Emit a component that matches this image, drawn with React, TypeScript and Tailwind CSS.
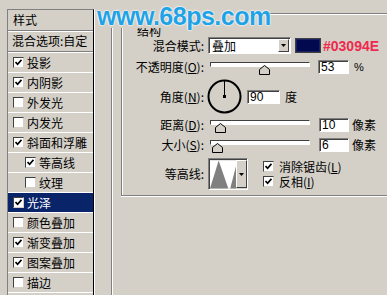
const styles = [
  { label: "投影", on: true },
  { label: "内阴影", on: true },
  { label: "外发光", on: false },
  { label: "内发光", on: false },
  { label: "斜面和浮雕", on: true },
  { label: "等高线", on: true, sub: true },
  { label: "纹理", on: false, sub: true },
  { label: "光泽", on: true, active: true },
  { label: "颜色叠加", on: false },
  { label: "渐变叠加", on: true },
  { label: "图案叠加", on: true },
  { label: "描边", on: false },
];

function Check({ on }: { on: boolean }) {
  return (
    <span className="flex h-[11px] w-[11px] shrink-0 items-center justify-center border border-b-[#d4d0c8] border-l-[#404040] border-r-[#d4d0c8] border-t-[#404040] bg-white">
      {on && (
        <svg width="7" height="7" viewBox="0 0 7 7">
          <path d="M0.5 3 L2.6 5.3 L6.5 0.8" stroke="#000" strokeWidth="1.7" fill="none" />
        </svg>
      )}
    </span>
  );
}

function Field({ value, w }: { value: string; w: string }) {
  return (
    <div
      className={`flex h-[14px] ${w} items-center border border-b-white border-l-[#808080] border-r-white border-t-[#808080] bg-white pl-[2px] font-['Liberation_Sans',sans-serif] text-[12px] leading-none shadow-[inset_1px_1px_0_#404040]`}
    >
      {value}
    </div>
  );
}

function Slider({ at }: { at: number }) {
  return (
    <div className="relative h-[14px] w-[100px]">
      <div className="mt-[3px] h-[5px] w-full border border-b-white border-l-[#404040] border-r-white border-t-[#404040] bg-white" />
      <svg
        className="absolute top-[3px]"
        style={{ left: at }}
        width="11"
        height="10"
        viewBox="0 0 11 10"
      >
        <polygon points="5.5,0.5 10.5,4.5 10.5,9.5 0.5,9.5 0.5,4.5" fill="#d4d0c8" stroke="#000" />
      </svg>
    </div>
  );
}

function DropButton() {
  return (
    <div className="flex h-full w-[11px] items-center justify-center border border-b-[#404040] border-l-white border-r-[#404040] border-t-white bg-[#d4d0c8]">
      <svg width="5" height="3" viewBox="0 0 5 3">
        <polygon points="0,0 5,0 2.5,3" fill="#000" />
      </svg>
    </div>
  );
}

function Label({ children }: { children: React.ReactNode }) {
  return <div className="w-[82px] shrink-0 whitespace-nowrap text-right">{children}</div>;
}

export default function App() {
  return (
    <div className="relative h-[295px] w-[387px] overflow-hidden bg-[#d4d0c8] font-['Noto_Sans_CJK_SC',sans-serif] text-[12px] leading-none text-black">
      <div className="flex h-full">
        {/* style list */}
        <div className="ml-[7px] mt-[9px] w-[87px] shrink-0 border-l border-r border-t border-l-[#808080] border-r-black border-t-[#808080] shadow-[1px_0_0_#fff]">
          <div className="flex h-[21px] items-center border-b border-[#808080] pl-[5px]">样式</div>
          <div className="flex h-[21px] items-center border-b border-[#808080] pl-[4px] shadow-[inset_0_1px_0_#fff]">
            混合选项:自定
          </div>
          <div className="h-px bg-white" />
          {styles.map((s) => (
            <div
              key={s.label}
              className={`flex h-[20px] items-center gap-[3px] border-b border-white ${
                s.sub ? "pl-[17px]" : "pl-[5px]"
              } ${s.active ? "bg-[#0a246a] text-white" : ""}`}
            >
              <Check on={s.on} />
              <span className="whitespace-nowrap">{s.label}</span>
            </div>
          ))}
        </div>

        {/* options */}
        <div className="ml-[17px] h-full w-[290px] shrink-0 border-l border-[#808080] shadow-[inset_1px_0_0_#fff]">
          <div className="relative ml-[9px] mt-[13px] h-[183px] w-[290px] border border-r-0 border-[#808080] shadow-[inset_1px_1px_0_#fff,0_1px_0_#fff]">
            <span className="absolute left-[14px] top-[11px] bg-[#d4d0c8] px-px">结构</span>
            <div className="flex flex-col">
              <div className="mt-[23px] flex h-[17px] items-center">
                <Label>混合模式:</Label>
                <div className="ml-[4px] flex h-[17px] w-[83px] items-center border border-b-white border-l-[#808080] border-r-white border-t-[#808080] bg-white shadow-[inset_1px_1px_0_#404040]">
                  <span className="flex-1 pl-[3px] pt-px">叠加</span>
                  <div className="h-[13px] pr-px">
                    <DropButton />
                  </div>
                </div>
                <div className="ml-[4px] h-[15px] w-[26px] border border-[#404040] bg-[#03094E] shadow-[inset_0_0_0_1px_#1a2160]" />
                <span className="ml-[2px] font-['Liberation_Sans',sans-serif] text-[14px] font-bold text-[#ee2a4e]">
                  #03094E
                </span>
              </div>

              <div className="mt-[6px] flex h-[14px] items-center">
                <Label>
                  不透明度(<u>O</u>):
                </Label>
                <div className="ml-[6px]">
                  <Slider at={49} />
                </div>
                <div className="ml-[8px]">
                  <Field value="53" w="w-[31px]" />
                </div>
                <span className="ml-[5px] font-['Liberation_Sans',sans-serif] text-[11px]">%</span>
              </div>

              <div className="mt-[5px] flex h-[35px] items-center">
                <Label>
                  角度(<u>N</u>):
                </Label>
                <svg className="ml-[3px]" width="35" height="35" viewBox="0 0 35 35">
                  <circle cx="17.5" cy="17.5" r="16" fill="none" stroke="#000" strokeWidth="2" />
                  <line x1="17.5" y1="17.5" x2="17.5" y2="2" stroke="#000" strokeWidth="1" />
                  <rect x="16" y="16" width="3" height="3" fill="#000" />
                </svg>
                <div className="ml-[5px]">
                  <Field value="90" w="w-[33px]" />
                </div>
                <span className="ml-[5px]">度</span>
              </div>

              <div className="mt-[4px] flex h-[14px] items-center">
                <Label>
                  距离(<u>D</u>):
                </Label>
                <div className="ml-[6px]">
                  <Slider at={5} />
                </div>
                <div className="ml-[9px]">
                  <Field value="10" w="w-[30px]" />
                </div>
                <span className="ml-[3px]">像素</span>
              </div>

              <div className="mt-[6px] flex h-[14px] items-center">
                <Label>
                  大小(<u>S</u>):
                </Label>
                <div className="ml-[6px]">
                  <Slider at={2} />
                </div>
                <div className="ml-[9px]">
                  <Field value="6" w="w-[30px]" />
                </div>
                <span className="ml-[3px]">像素</span>
              </div>

              <div className="mt-[6px] flex h-[32px] items-center">
                <Label>等高线:</Label>
                <div className="ml-[4px] flex h-[32px] w-[40px] border border-b-white border-l-[#808080] border-r-white border-t-[#808080] shadow-[inset_1px_1px_0_#404040]">
                  <svg className="ml-px mt-px" width="27" height="29" viewBox="0 0 27 29">
                    <rect width="27" height="29" fill="#fff" />
                    <polygon points="0,29 9,0 19,29" fill="#808080" />
                    <polygon points="21,29 27,6 27,29" fill="#808080" />
                  </svg>
                  <div className="h-[29px] pt-px">
                    <DropButton />
                  </div>
                </div>
                <div className="ml-[15px] flex flex-col">
                  <div className="flex h-[15px] items-center gap-[5px]">
                    <Check on />
                    <span className="leading-[12px]">
                      消除锯齿(<u>L</u>)
                    </span>
                  </div>
                  <div className="flex h-[15px] items-center gap-[5px]">
                    <Check on />
                    <span className="leading-[12px]">
                      反相(<u>I</u>)
                    </span>
                  </div>
                </div>
              </div>
            </div>
          </div>
        </div>
      </div>

      {/* watermark */}
      <div className="absolute left-[97px] top-0 h-[28px] w-[170px] bg-[#d4d0c8]">
        <div className="pt-[4px] font-['Liberation_Sans',sans-serif] text-[25px] font-bold leading-none tracking-[-0.5px] text-[#1fa3e6] [text-shadow:0_0_1px_#fff,0_0_2px_#fff,0_0_2px_#fff]">
          www.68ps.com
        </div>
      </div>
    </div>
  );
}
